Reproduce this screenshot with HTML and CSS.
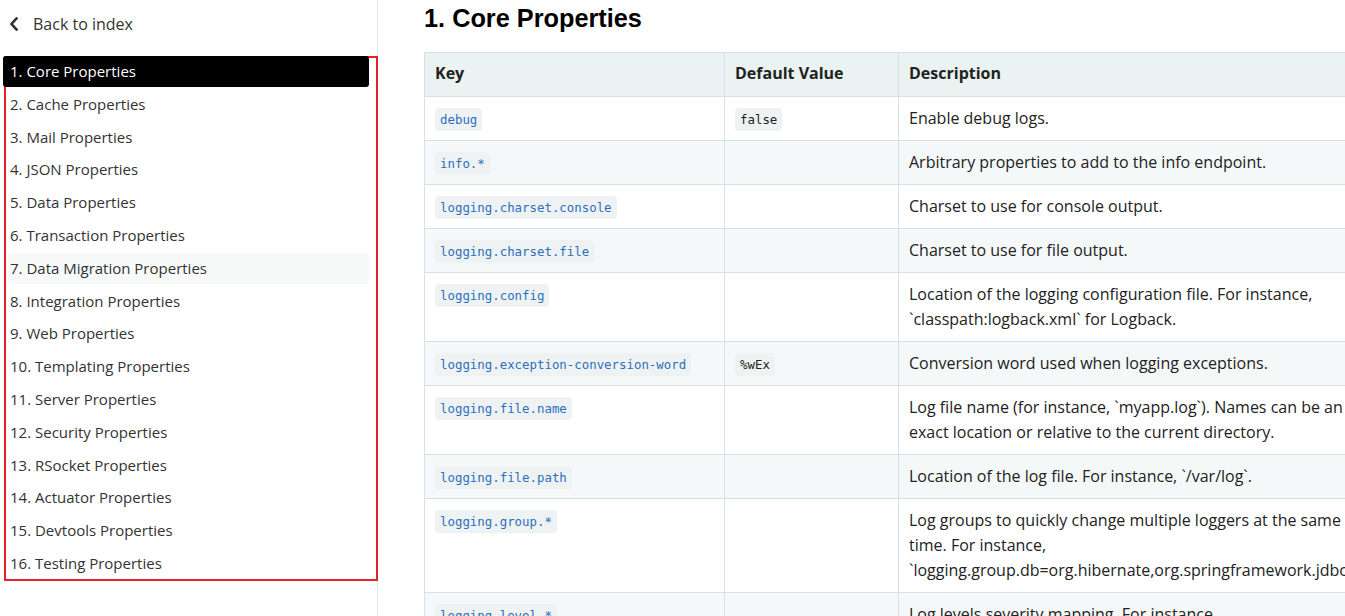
FILE: index.html
```html
<!DOCTYPE html>
<html lang="en">
<head>
<meta charset="utf-8">
<title>Core Properties</title>
<link rel="stylesheet" href="styles.css">
</head>
<body>
<div class="page">
  <aside class="sidebar">
    <a class="back" href="#">
      <svg class="chev" width="10" height="14" viewBox="0 0 10 14"><path d="M7.5 1.5 L2.5 7 L7.5 12.5" fill="none" stroke="#333" stroke-width="2.6" stroke-linecap="square"/></svg>
      <span>Back to index</span>
    </a>
    <ul class="toc">
      <li class="active">1. Core Properties</li>
      <li>2. Cache Properties</li>
      <li>3. Mail Properties</li>
      <li>4. JSON Properties</li>
      <li>5. Data Properties</li>
      <li>6. Transaction Properties</li>
      <li class="hover">7. Data Migration Properties</li>
      <li>8. Integration Properties</li>
      <li>9. Web Properties</li>
      <li>10. Templating Properties</li>
      <li>11. Server Properties</li>
      <li>12. Security Properties</li>
      <li>13. RSocket Properties</li>
      <li>14. Actuator Properties</li>
      <li>15. Devtools Properties</li>
      <li>16. Testing Properties</li>
    </ul>
  </aside>
  <main class="content">
    <h1>1. Core Properties</h1>
    <table class="props">
      <colgroup><col class="c-key"><col class="c-def"><col class="c-desc"></colgroup>
      <thead>
        <tr><th>Key</th><th>Default Value</th><th>Description</th></tr>
      </thead>
      <tbody>
        <tr><td><code class="key">debug</code></td><td><code>false</code></td><td>Enable debug logs.</td></tr>
        <tr><td><code class="key">info.*</code></td><td></td><td>Arbitrary properties to add to the info endpoint.</td></tr>
        <tr><td><code class="key">logging.charset.console</code></td><td></td><td>Charset to use for console output.</td></tr>
        <tr><td><code class="key">logging.charset.file</code></td><td></td><td>Charset to use for file output.</td></tr>
        <tr><td><code class="key">logging.config</code></td><td></td><td>Location of the logging configuration file. For instance, `classpath:logback.xml` for Logback.</td></tr>
        <tr><td><code class="key">logging.exception-conversion-word</code></td><td><code>%wEx</code></td><td>Conversion word used when logging exceptions.</td></tr>
        <tr><td><code class="key">logging.file.name</code></td><td></td><td>Log file name (for instance, `myapp.log`). Names can be an exact location or relative to the current directory.</td></tr>
        <tr><td><code class="key">logging.file.path</code></td><td></td><td>Location of the log file. For instance, `/var/log`.</td></tr>
        <tr><td><code class="key">logging.group.*</code></td><td></td><td>Log groups to quickly change multiple loggers at the same time. For instance, `logging.group.db=org.hibernate,org.springframework.jdbc`.</td></tr>
        <tr><td><code class="key">logging.level.*</code></td><td></td><td>Log levels severity mapping. For instance, `logging.level.org.springframework=DEBUG`.</td></tr>
      </tbody>
    </table>
  </main>
</div>
</body>
</html>
```

FILE: styles.css
```css
html, body {
  margin: 0;
  padding: 0;
  height: 100%;
  overflow: hidden;
  background: #fff;
}
body {
  font-family: "Open Sans", "Liberation Sans", sans-serif;
  color: #222;
}
.page {
  display: flex;
  height: 100%;
}
.sidebar {
  width: 377px;
  flex: none;
  border-right: 1px solid #e6e8e8;
}
.back {
  display: flex;
  align-items: center;
  gap: 14px;
  height: 24px;
  margin: 12px 0 0 9px;
  color: #333;
  text-decoration: none;
  font-size: 16px;
}
.toc {
  list-style: none;
  margin: 20px 0 0 4px;
  padding: 0;
  width: 370px;
  border: 2px solid #e3212a;
}
.toc li {
  font-size: 15px;
  line-height: 24.8px;
  padding: 3px 0 3px 4px;
  margin: 0 7px 2px 0;
  color: #333;
  border-radius: 3px;
}
.toc li:first-child {
  margin-top: -2px;
}
.toc li:last-child {
  margin-bottom: 0;
}
.toc li.active {
  background: #000;
  color: #fff;
  margin-left: -3px;
  padding-left: 7px;
  position: relative;
}
.toc li.hover {
  background: #f8fafa;
  margin-left: 2px;
  padding-left: 2px;
}
.content {
  flex: 1;
  min-width: 0;
  padding-left: 46px;
  overflow: hidden;
}
h1 {
  font-family: "Liberation Sans", Arial, sans-serif;
  font-size: 25.3px;
  font-weight: bold;
  color: #000;
  margin: 4px 0 0;
  line-height: 28px;
}
.props {
  margin-top: 20px;
  border-collapse: collapse;
  table-layout: fixed;
  width: 955px;
  font-size: 16px;
  line-height: 25px;
}
.c-key { width: 300px; }
.c-def { width: 174px; }
.c-desc { width: 481px; }
.props th, .props td {
  border: 1px solid #d6e1e1;
  padding: 9px 10px;
  text-align: left;
  vertical-align: top;
  color: #222;
}
.props th {
  background: #ebf2f2;
  font-weight: bold;
  padding: 8px 10px 10px;
}
.props tbody tr:nth-child(even) td {
  background: #f5f8f8;
}
code {
  font-family: "DejaVu Sans Mono", "Liberation Mono", monospace;
  font-size: 12.4px;
  line-height: 1;
  background: #eff2f2;
  border-radius: 4px;
  padding: 4px 5px;
  color: #222;
}
code.key {
  color: #2a6fc0;
}
```
